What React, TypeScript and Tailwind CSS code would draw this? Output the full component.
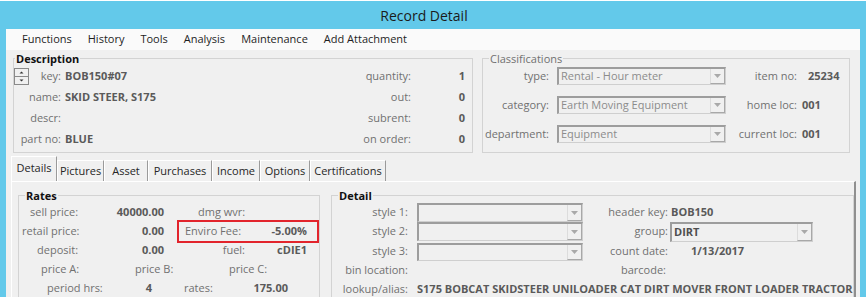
import React from "react"

const menu = ["Functions", "History", "Tools", "Analysis", "Maintenance", "Add Attachment"]

const tabs = [
  { name: "Details", w: "w-[46px]", active: true },
  { name: "Pictures", w: "w-[47px]" },
  { name: "Asset", w: "w-[44px]" },
  { name: "Purchases", w: "w-[64px]" },
  { name: "Income", w: "w-[48px]" },
  { name: "Options", w: "w-[50px]" },
  { name: "Certifications", w: "w-[76px]" },
]

function Arrow() {
  return (
    <svg width="7" height="4" viewBox="0 0 7 4">
      <path d="M0 0h7L3.5 4z" fill="#a9a9a9" />
    </svg>
  )
}

function Spinner() {
  return (
    <svg width="15" height="17" viewBox="0 0 15 17">
      <rect x="0.5" y="0.5" width="14" height="16" fill="#f0f0f0" stroke="#8a8a8a" />
      <line x1="1" y1="8.5" x2="14" y2="8.5" stroke="#8a8a8a" />
      <path d="M5.5 5.5h4L7.5 3.5z" fill="#333" />
      <path d="M5.5 11.5h4L7.5 13.5z" fill="#333" />
    </svg>
  )
}

function Combo({ value, bold, className }: { value?: string; bold?: boolean; className: string }) {
  return (
    <div
      className={`flex items-stretch border border-[#cfcfcf] border-l-2 border-t-2 border-l-[#9d9d9d] border-t-[#9d9d9d] bg-[#f0f0f0] ${className}`}
    >
      <div
        className={`flex flex-1 items-center overflow-hidden whitespace-nowrap pl-[2px] ${
          bold ? "font-bold text-[#4f4f4f]" : "text-[#8c8c8c]"
        }`}
      >
        {value}
      </div>
      <div className="flex w-[15px] items-center justify-center border-l border-b border-r border-l-[#dcdcdc] border-b-[#a8a8a8] border-r-[#a8a8a8]">
        <Arrow />
      </div>
    </div>
  )
}

export default function App() {
  return (
    <div className="h-[303px] w-[866px] overflow-hidden bg-white font-['Open_Sans',sans-serif] text-[11px] text-[#707070]">
      <div className="flex h-[297px] flex-col border-t border-white bg-[#63c9ea]">
        <div className="flex h-[28px] shrink-0 items-center justify-center pr-[18px] text-[14px] text-[#1b1b1b]">
          Record Detail
        </div>
        <div className="mx-[6px] flex flex-1 flex-col overflow-hidden bg-[#f0f0f0]">
          <div className="flex h-[21px] shrink-0 items-center gap-[16px] bg-[#fafafa] pl-[16px] text-[#1e1e1e]">
            {menu.map((m) => (
              <span key={m}>{m}</span>
            ))}
          </div>

          <div className="flex h-[103px] shrink-0 items-start pl-[7px] pt-[1px]">
            <fieldset className="h-[102px] w-[460px] border border-[#d3d3d3]">
              <legend className="ml-[1px] px-[1px] font-bold leading-[15px] text-[#111]">Description</legend>
              <div className="flex">
                <div className="w-[300px]">
                  <div className="flex h-[21px] items-center">
                    <div className="flex w-[47px] items-center justify-between">
                      <Spinner />
                      <span>key:</span>
                    </div>
                    <span className="ml-[4px] font-bold text-[#5a5a5a]">BOB150#07</span>
                  </div>
                  <div className="flex h-[21px] items-center">
                    <span className="w-[47px] text-right">name:</span>
                    <span className="ml-[4px] font-bold text-[#5a5a5a]">SKID STEER, S175</span>
                  </div>
                  <div className="flex h-[21px] items-center">
                    <span className="w-[47px] text-right">descr:</span>
                  </div>
                  <div className="flex h-[21px] items-center">
                    <span className="w-[47px] text-right whitespace-nowrap">part no:</span>
                    <span className="ml-[4px] font-bold text-[#5a5a5a]">BLUE</span>
                  </div>
                </div>
                <div className="flex-1">
                  {[
                    ["quantity:", "1"],
                    ["out:", "0"],
                    ["subrent:", "0"],
                    ["on order:", "0"],
                  ].map(([l, v]) => (
                    <div key={l} className="flex h-[21px] items-center">
                      <span className="w-[97px] text-right">{l}</span>
                      <span className="w-[54px] text-right font-bold text-[#5a5a5a]">{v}</span>
                    </div>
                  ))}
                </div>
              </div>
            </fieldset>

            <fieldset className="ml-[9px] h-[102px] w-[368px] border border-[#d3d3d3]">
              <legend className="ml-[6px] px-[1px] leading-[15px] text-[#707070]">Classifications</legend>
              <div className="flex flex-col gap-[9px]">
                <div className="flex h-[20px] items-center">
                  <span className="w-[66px] text-right">type:</span>
                  <Combo value="Rental - Hour meter" className="ml-[8px] h-[18px] w-[169px]" />
                  <span className="w-[71px] text-right">item no:</span>
                  <span className="ml-[11px] font-bold text-[#5a5a5a]">25234</span>
                </div>
                <div className="flex h-[20px] items-center">
                  <span className="w-[66px] text-right">category:</span>
                  <Combo value="Earth Moving Equipment" className="ml-[8px] h-[18px] w-[169px]" />
                  <span className="w-[71px] text-right">home loc:</span>
                  <span className="ml-[5px] font-bold text-[#5a5a5a]">001</span>
                </div>
                <div className="flex h-[20px] items-center">
                  <span className="w-[66px] text-right">department:</span>
                  <Combo value="Equipment" className="ml-[8px] h-[18px] w-[169px]" />
                  <span className="w-[71px] text-right whitespace-nowrap">current loc:</span>
                  <span className="ml-[5px] font-bold text-[#5a5a5a]">001</span>
                </div>
              </div>
            </fieldset>
          </div>

          <div className="flex h-[28px] shrink-0 items-end pl-[5px] text-[#262626]">
            {tabs.map((t) => (
              <div
                key={t.name}
                className={`flex items-center justify-center border-l border-t border-r border-l-white border-t-white border-r-[#9a9a9a] ${t.w} ${
                  t.active ? "h-[25px] pb-[2px]" : "h-[21px]"
                }`}
              >
                {t.name}
              </div>
            ))}
          </div>

          <div className="ml-[5px] flex w-[845px] flex-1 items-start border-l border-t border-r-2 border-l-white border-t-white border-r-[#8f8f8f] pl-[6px] pt-[6px]">
            <fieldset className="h-[140px] w-[301px] shrink-0 border border-[#d3d3d3]">
              <legend className="ml-[6px] px-[1px] font-bold leading-[15px] text-[#111]">Rates</legend>
              <div className="flex h-[19px] items-center">
                <span className="w-[67px] pl-[11px]">sell price:</span>
                <span className="w-[78px] text-right font-bold text-[#5a5a5a]">40000.00</span>
                <span className="pl-[34px]">dmg wvr:</span>
              </div>
              <div className="flex h-[19px] items-center">
                <span className="w-[67px] whitespace-nowrap pl-[3px]">retail price:</span>
                <span className="w-[78px] text-right font-bold text-[#5a5a5a]">0.00</span>
                <div className="-my-[2px] ml-[13px] flex h-[23px] w-[142px] items-center justify-between border-2 border-[#e2242c] pl-[6px] pr-[10px]">
                  <span>Enviro Fee:</span>
                  <span className="font-bold text-[#5a5a5a]">-5.00%</span>
                </div>
              </div>
              <div className="flex h-[19px] items-center">
                <span className="w-[67px] pl-[18px]">deposit:</span>
                <span className="w-[78px] text-right font-bold text-[#5a5a5a]">0.00</span>
                <span className="w-[81px] text-right">fuel:</span>
                <span className="w-[62px] text-right font-bold text-[#5a5a5a]">cDIE1</span>
              </div>
              <div className="flex h-[19px] items-center">
                <span className="w-[67px] whitespace-nowrap pl-[22px]">price A:</span>
                <span className="w-[94px] whitespace-nowrap pl-[49px]">price B:</span>
                <span className="whitespace-nowrap pl-[49px]">price C:</span>
              </div>
              <div className="flex h-[19px] items-center">
                <span className="w-[100px] whitespace-nowrap pl-[28px]">period hrs:</span>
                <span className="w-[33px] text-right font-bold text-[#5a5a5a]">4</span>
                <span className="w-[68px] pl-[32px]">rates:</span>
                <span className="w-[68px] text-right font-bold text-[#5a5a5a]">175.00</span>
              </div>
            </fieldset>

            <fieldset className="ml-[11px] h-[140px] w-[508px] shrink-0 border border-[#d3d3d3]">
              <legend className="ml-[6px] px-[1px] font-bold leading-[15px] text-[#111]">Detail</legend>
              <div className="flex h-[19px] items-center">
                <span className="w-[76px] text-right">style 1:</span>
                <Combo className="ml-[9px] h-[19px] w-[166px]" />
                <span className="w-[85px] text-right">header key:</span>
                <span className="ml-[3px] font-bold text-[#5a5a5a]">BOB150</span>
              </div>
              <div className="flex h-[19px] items-center">
                <span className="w-[76px] text-right">style 2:</span>
                <Combo className="ml-[9px] h-[19px] w-[166px]" />
                <span className="w-[85px] text-right">group:</span>
                <Combo value="DIRT" bold className="ml-[2px] h-[20px] w-[143px]" />
              </div>
              <div className="mt-[1px] flex h-[19px] items-center">
                <span className="w-[76px] text-right">style 3:</span>
                <Combo className="ml-[9px] h-[18px] w-[166px]" />
                <span className="w-[85px] text-right">count date:</span>
                <span className="ml-[23px] font-bold text-[#5a5a5a]">1/13/2017</span>
              </div>
              <div className="flex h-[19px] items-center">
                <span className="w-[76px] whitespace-nowrap text-right">bin location:</span>
                <span className="w-[175px]" />
                <span className="w-[83px] text-right">barcode:</span>
              </div>
              <div className="flex h-[19px] items-center">
                <span className="w-[76px] whitespace-nowrap text-right">lookup/alias:</span>
                <span className="ml-[9px] flex-1 overflow-hidden whitespace-nowrap font-bold text-[#5a5a5a]">
                  S175 BOBCAT SKIDSTEER UNILOADER CAT DIRT MOVER FRONT LOADER TRACTOR
                </span>
              </div>
            </fieldset>
          </div>
        </div>
      </div>
    </div>
  )
}
